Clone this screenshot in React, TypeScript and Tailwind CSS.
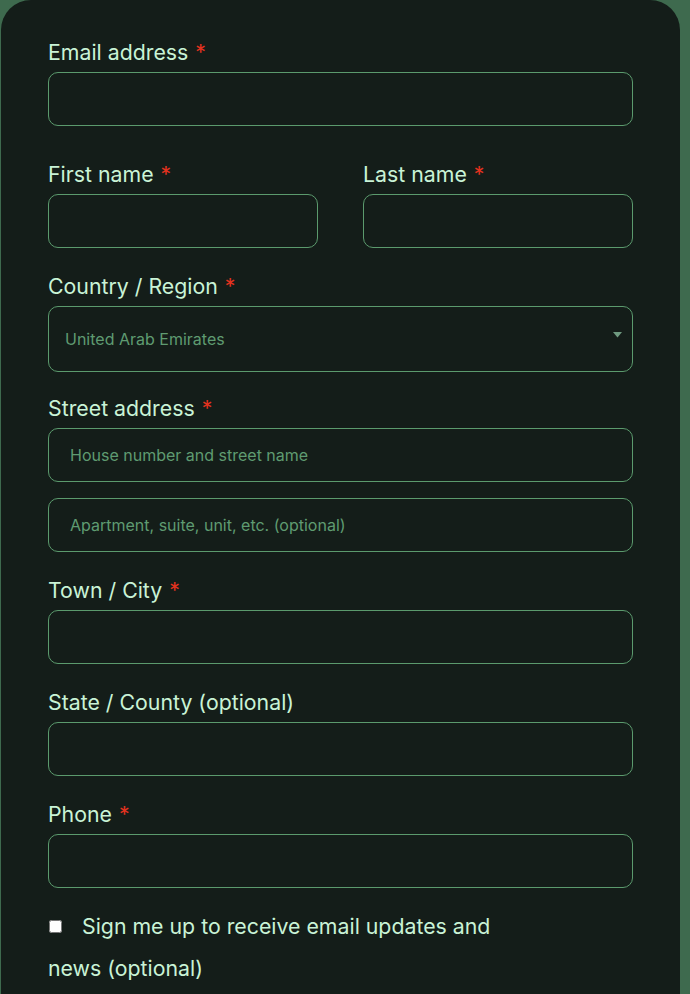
import React from 'react';

const font = { fontFamily: 'Inter, "Noto Sans", sans-serif' };

const Label = ({ text, required }: { text: string; required?: boolean }) => (
  <label className="block text-[21.3px] leading-[28px] text-[#c9f3d6] mb-[6px]">
    {text}
    {required && <span className="text-[#e3321f] ml-[7px]">*</span>}
  </label>
);

const Input = ({ placeholder, className = '' }: { placeholder?: string; className?: string }) => (
  <input
    placeholder={placeholder}
    className={`block w-full h-[54px] rounded-[10px] border border-[#5b9a6d] bg-transparent px-[21px] text-[16px] text-[#c9f3d6] placeholder:text-[#5f9b71] outline-none ${className}`}
  />
);

export default function App() {
  return (
    <div className="min-h-[994px] bg-[#3e6a4e] pl-[1px]" style={font}>
      <div className="w-[679px] min-h-[994px] rounded-t-[30px] bg-[#141d19] px-[47px] pt-[38px]">
        <div className="mb-[34px]">
          <Label text="Email address" required />
          <Input />
        </div>

        <div className="grid grid-cols-2 gap-x-[45px] mb-[24px]">
          <div>
            <Label text="First name" required />
            <Input />
          </div>
          <div>
            <Label text="Last name" required />
            <Input />
          </div>
        </div>

        <div className="mb-[22px]">
          <Label text="Country / Region" required />
          <div className="relative h-[66px] rounded-[10px] border border-[#5b9a6d] flex items-center pl-[16px]">
            <span className="text-[16px] text-[#5f9b71]">United Arab Emirates</span>
            <svg className="absolute right-[10px] top-[25px]" width="9" height="6" viewBox="0 0 9 6">
              <path d="M0 0h9L4.5 5.5z" fill="#6f9a80" />
            </svg>
          </div>
        </div>

        <div className="mb-[24px]">
          <Label text="Street address" required />
          <Input placeholder="House number and street name" className="mb-[16px]" />
          <Input placeholder="Apartment, suite, unit, etc. (optional)" />
        </div>

        <div className="mb-[24px]">
          <Label text="Town / City" required />
          <Input />
        </div>

        <div className="mb-[24px]">
          <Label text="State / County (optional)" />
          <Input />
        </div>

        <div className="mb-[17px]">
          <Label text="Phone" required />
          <Input />
        </div>

        <label className="block w-[470px] text-[21.3px] leading-[42px] text-[#c9f3d6]">
          <input type="checkbox" className="w-[13px] h-[13px] ml-[1px] mr-[20px] align-middle relative -top-[2px]" />
          Sign me up to receive email updates and news (optional)
        </label>
      </div>
    </div>
  );
}
